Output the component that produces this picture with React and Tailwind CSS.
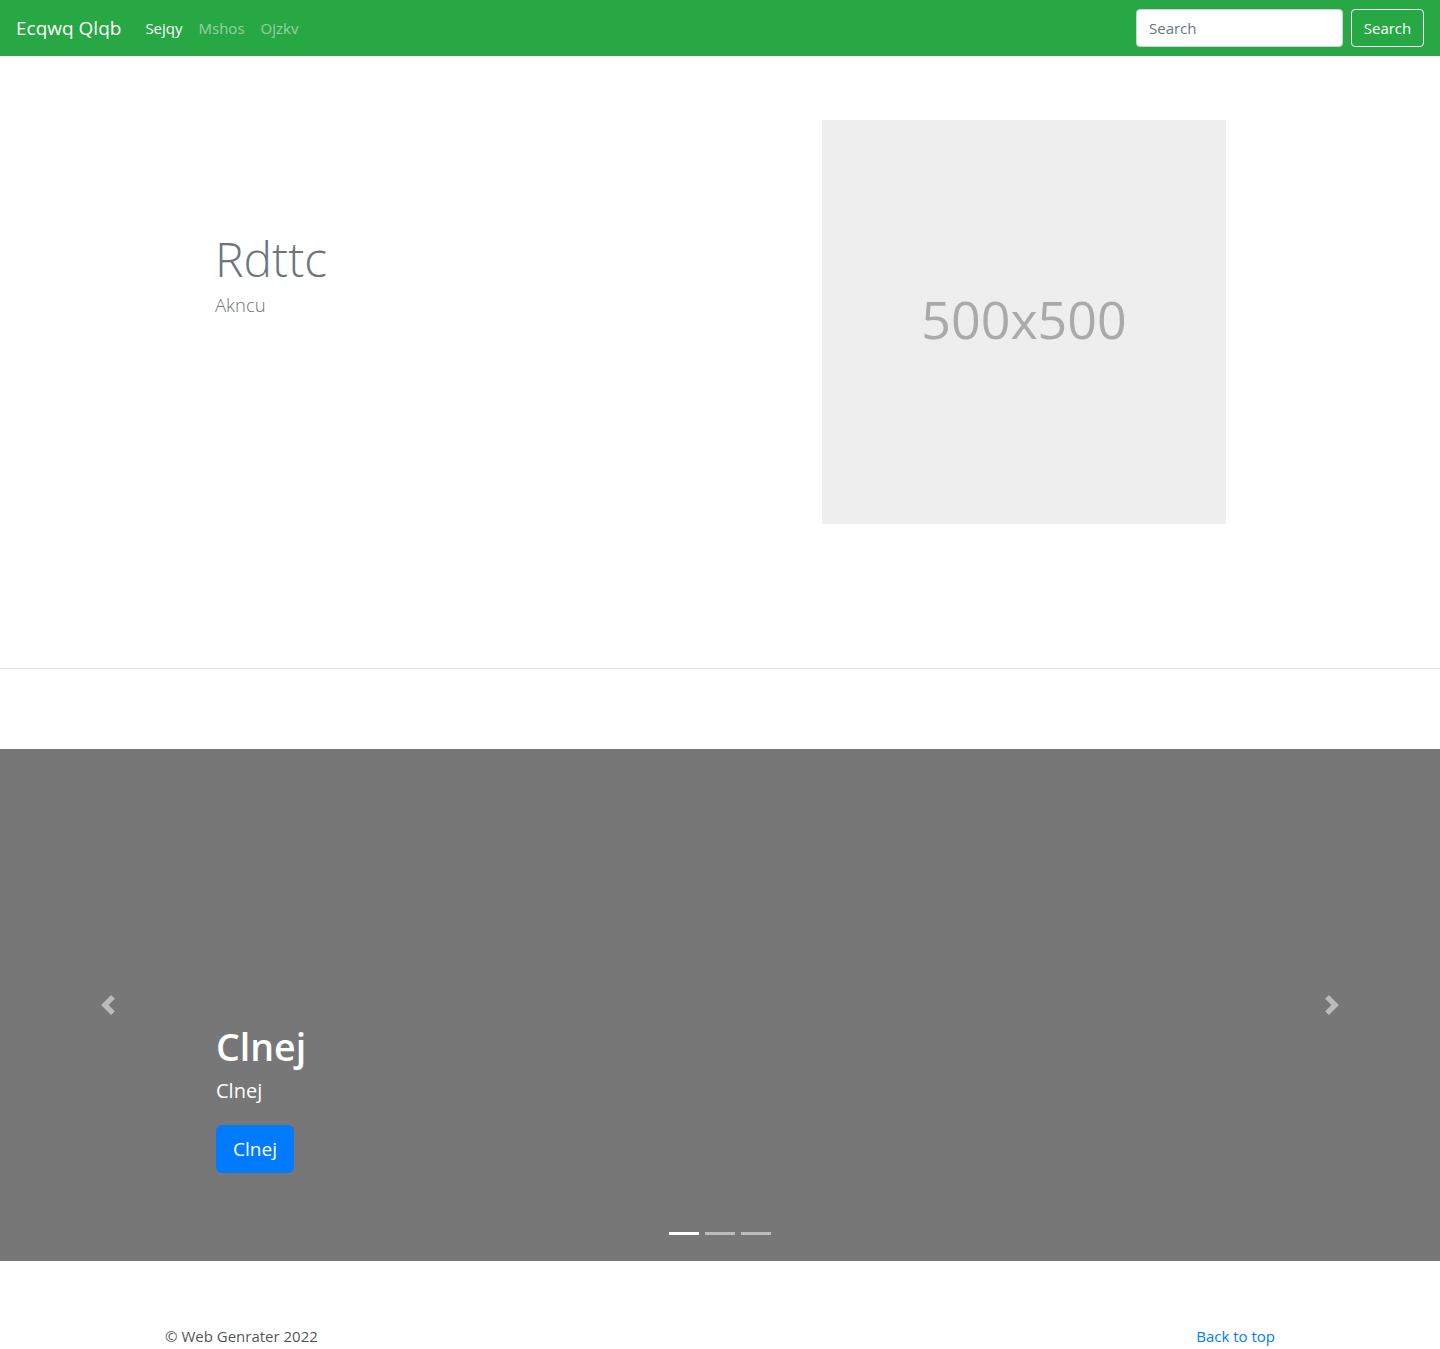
import React from 'react';

const font = { fontFamily: '"Open Sans", "Noto Sans", sans-serif' };

const Chevron = ({ dir }) => (
  <svg width="20" height="20" viewBox="0 0 8 8" className="opacity-50">
    {dir === 'left' ? (
      <path fill="#fff" d="M5.25 0l-4 4 4 4 1.5-1.5-2.5-2.5 2.5-2.5-1.5-1.5z" />
    ) : (
      <path fill="#fff" d="M2.75 0l-1.5 1.5 2.5 2.5-2.5 2.5 1.5 1.5 4-4-4-4z" />
    )}
  </svg>
);

const App = () => {
  return (
    <div className="w-full min-h-[1349px] bg-white text-[#212529]" style={font}>
      {/* navbar */}
      <nav className="h-14 bg-[#28a745] flex items-center px-4">
        <span className="text-white text-[19px] mr-6">Ecqwq Qlqb</span>
        <div className="flex gap-4 text-[15px]">
          <span className="text-white">Sejqy</span>
          <span className="text-white/50">Mshos</span>
          <span className="text-white/50">Ojzkv</span>
        </div>
        <div className="ml-auto flex items-center gap-2">
          <input
            placeholder="Search"
            className="w-[207px] h-[38px] rounded bg-white border border-[#ced4da] px-3 text-[15px] placeholder-[#6c757d] outline-none"
          />
          <button className="h-[38px] w-[73px] rounded border border-[#f8f9fa] text-white text-[15px]">Search</button>
        </div>
      </nav>

      {/* hero */}
      <section className="border-b border-[#dee2e6]">
        <div className="max-w-[1140px] mx-auto px-[15px] pt-16 pb-[144px] flex">
          <div className="w-1/2 pl-[50px] pt-[110px]">
            <h1 className="text-[48px] font-light text-[#6c757d] leading-[1.2]">Rdttc</h1>
            <p className="text-[18.5px] font-light text-[#6c757d] leading-[1.5] mt-[3px]">Akncu</p>
          </div>
          <div className="w-1/2 pl-[102px]">
            <div className="w-[404px] h-[404px] bg-[#eee] flex items-center justify-center">
              <span className="text-[52px] text-[#aaa] -mt-[6px]">500x500</span>
            </div>
          </div>
        </div>
      </section>

      {/* carousel */}
      <section className="mt-20 relative h-[512px] bg-[#777] flex items-end">
        <div className="pl-[216px] pb-[88px] text-white">
          <h2 className="text-[37.5px] font-semibold leading-[1.2]">Clnej</h2>
          <p className="text-[20px] mt-[7px] leading-[1.5]">Clnej</p>
          <button className="mt-[19px] h-12 w-[78px] rounded-md bg-[#007bff] text-white text-[19px]">Clnej</button>
        </div>
        <div className="absolute left-0 top-0 bottom-0 w-[15%] flex items-center justify-center">
          <Chevron dir="left" />
        </div>
        <div className="absolute right-0 top-0 bottom-0 w-[15%] flex items-center justify-center">
          <Chevron dir="right" />
        </div>
        <div className="absolute bottom-[26px] left-0 right-0 flex justify-center gap-[6px]">
          <span className="w-[30px] h-[3px] bg-white" />
          <span className="w-[30px] h-[3px] bg-white/50" />
          <span className="w-[30px] h-[3px] bg-white/50" />
        </div>
      </section>

      {/* footer */}
      <footer className="max-w-[1140px] mx-auto px-[15px] pt-[63px] flex justify-between text-[15px] leading-6">
        <span className="text-[#212529]/80">© Web Genrater 2022</span>
        <span className="text-[#007bff]">Back to top</span>
      </footer>
    </div>
  );
};

export default App;
